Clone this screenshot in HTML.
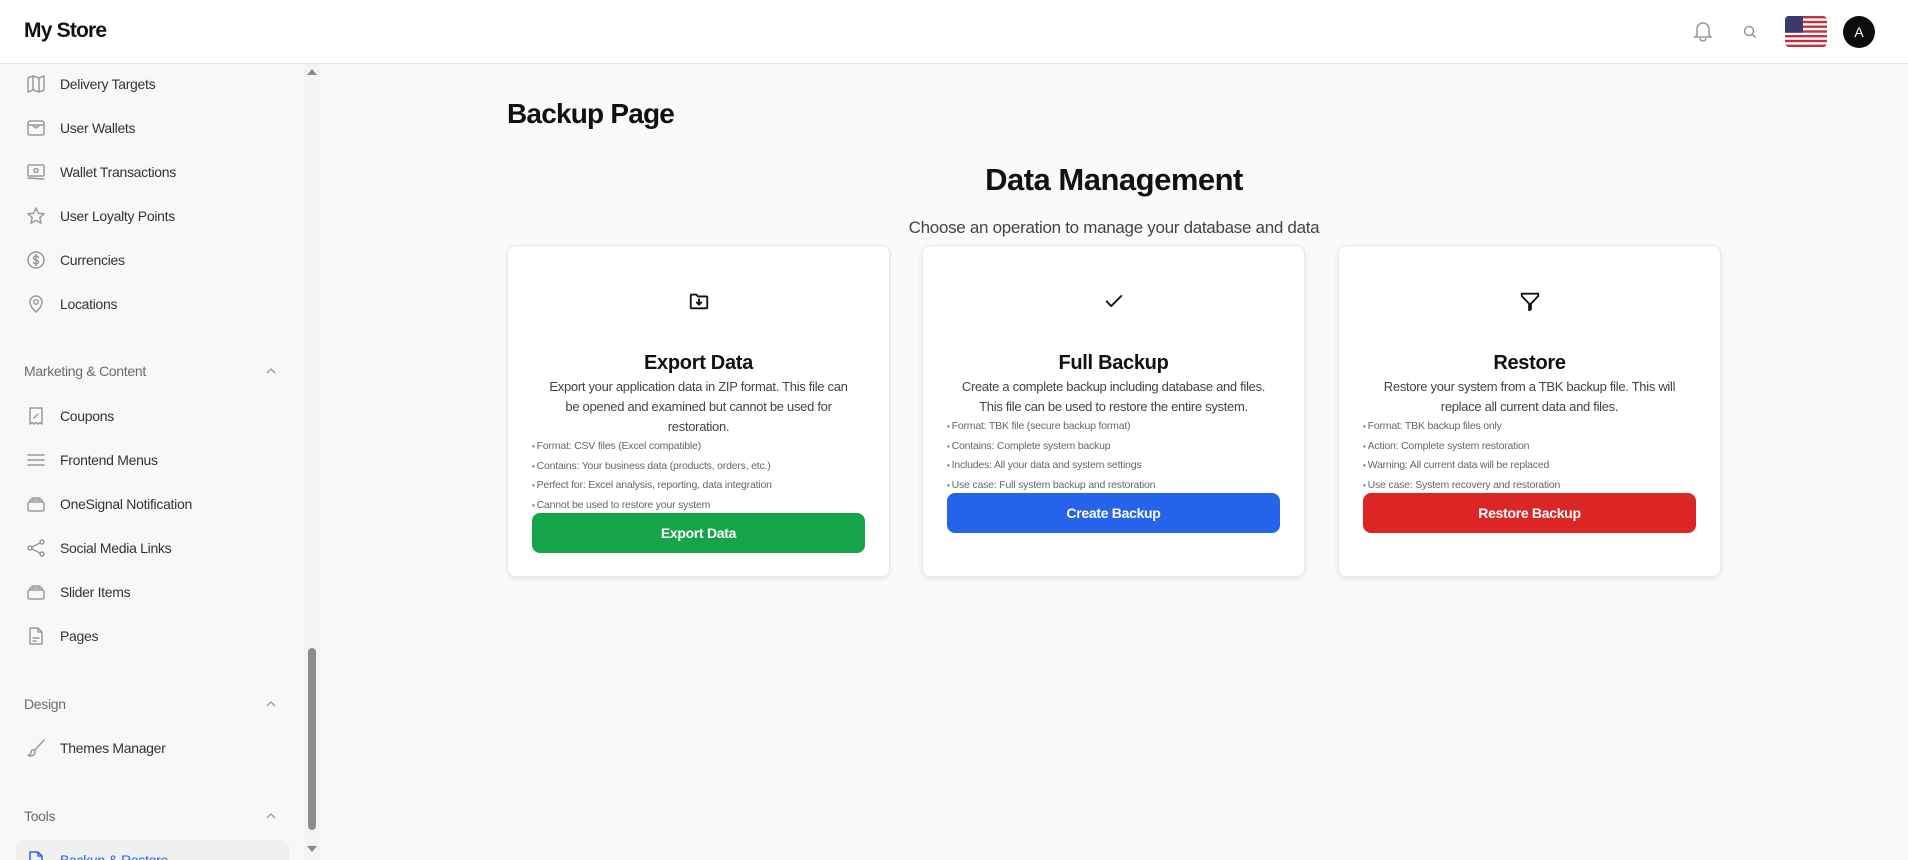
<!DOCTYPE html>
<html><head><meta charset="utf-8"><style>
*{box-sizing:border-box;margin:0;padding:0}
body{width:1908px;height:860px;overflow:hidden;background:#fafafa;font-family:"Liberation Sans",sans-serif;color:#111;position:relative}
.hdr{position:absolute;left:0;top:0;width:1908px;height:64px;background:#fff;border-bottom:1px solid #e5e5e5}
.logo{position:absolute;left:24px;top:19px;font-size:21px;font-weight:bold;letter-spacing:-0.8px}
.side{position:absolute;left:0;top:64px;width:304px;height:796px;background:#f8f8f8;overflow:hidden}
.sb{position:absolute;left:304px;top:64px;width:16px;height:796px;background:#f4f4f4}
.thumb{position:absolute;left:308px;top:648px;width:8px;height:182px;background:#8c8c8c;border-radius:4px}
.item{position:absolute;left:26px;height:24px;display:flex;align-items:center;font-size:14px;color:#333;letter-spacing:-0.3px}
.item svg{width:20px;height:20px;margin-right:14px;fill:none;stroke:#9a9a9a;stroke-width:1.5;stroke-linecap:round;stroke-linejoin:round}
.sec{position:absolute;left:24px;font-size:14px;color:#6b6b6b;letter-spacing:-0.3px}
.chev{position:absolute;left:265px;width:12px;height:12px}
.main h1{position:absolute;left:507px;top:98px;font-size:28px;font-weight:bold;letter-spacing:-0.8px}
.dm{position:absolute;left:320px;width:1588px;text-align:center}
.card{position:absolute;top:245px;width:383px;height:332px;background:#fff;border:1px solid #e8e8e8;border-radius:8px;box-shadow:0 2px 6px rgba(0,0,0,.08);padding:0 24px;text-align:center}
.card .ic{height:104px;display:flex;justify-content:center;padding-top:44px}
.card .ic svg{width:22px;height:22px;fill:none;stroke:#111;stroke-width:2;stroke-linecap:round;stroke-linejoin:round}
.card h3{font-size:20px;line-height:27px;letter-spacing:-0.3px}
.card p{font-size:13px;line-height:20px;color:#444;letter-spacing:-0.3px;white-space:nowrap}
.card ul{list-style:none;text-align:left;font-size:10.5px;line-height:19.6px;height:auto;color:#666;letter-spacing:-0.2px}
.card li{height:19.6px}
.card li:before{content:"• ";font-size:8px}
.btn{height:40px;border-radius:8px;color:#fff;font-weight:bold;font-size:14px;display:flex;align-items:center;justify-content:center;letter-spacing:-0.3px}
</style></head><body>
<div class="hdr">
 <div class="logo">My Store</div>
 <svg style="position:absolute;left:1693px;top:20px" width="20" height="22" viewBox="0 0 20 22" fill="none" stroke="#999" stroke-width="1.5"><path d="M4 15V9a6 6 0 0 1 12 0v6l2 2H2z"/><path d="M7 18a3 3 0 0 0 6 0"/></svg>
 <svg style="position:absolute;left:1743px;top:25px" width="14" height="14" viewBox="0 0 14 14" fill="none" stroke="#888" stroke-width="1.3"><circle cx="6" cy="6" r="4.5"/><path d="M9.5 9.5l3 3"/></svg>
 <svg style="position:absolute;left:1785px;top:16px" width="42" height="31" viewBox="0 0 42 31"><defs><clipPath id="c"><rect width="42" height="31" rx="4"/></clipPath></defs><g clip-path="url(#c)"><rect width="42" height="31" fill="#fff"/><g fill="#c23040"><rect y="0" width="42" height="2.4"/><rect y="4.8" width="42" height="2.4"/><rect y="9.5" width="42" height="2.4"/><rect y="14.3" width="42" height="2.4"/><rect y="19" width="42" height="2.4"/><rect y="23.8" width="42" height="2.4"/><rect y="28.6" width="42" height="2.4"/></g><rect width="18" height="16.7" fill="#3c3b6e"/></g></svg>
 <div style="position:absolute;left:1843px;top:16px;width:32px;height:32px;border-radius:50%;background:#0b0b0b;color:#fff;font-size:14px;display:flex;align-items:center;justify-content:center">A</div>
</div>
<div class="side">
 <div class="item" style="top:8px"><svg viewBox="0 0 20 20"><path d="M2 4l5-2 6 2 5-2v14l-5 2-6-2-5 2z M7 2v14 M13 4v14"/></svg>Delivery Targets</div>
 <div class="item" style="top:52px"><svg viewBox="0 0 20 20"><rect x="2" y="3" width="16" height="14" rx="2"/><path d="M2 7h16 M6 7l4 3 4-3"/></svg>User Wallets</div>
 <div class="item" style="top:96px"><svg viewBox="0 0 20 20"><rect x="2" y="3" width="16" height="11" rx="1"/><circle cx="10" cy="8.5" r="2"/><path d="M2 16l16 1"/></svg>Wallet Transactions</div>
 <div class="item" style="top:140px"><svg viewBox="0 0 20 20"><path d="M10 2l2.4 5.2 5.6.6-4.2 3.8 1.2 5.6L10 14.4 5 17.2l1.2-5.6L2 7.8l5.6-.6z"/></svg>User Loyalty Points</div>
 <div class="item" style="top:184px"><svg viewBox="0 0 20 20"><circle cx="10" cy="10" r="8"/><path d="M12.5 7.5c-.5-1-1.5-1.5-2.5-1.5-1.5 0-2.5.8-2.5 2s1 1.6 2.5 2 2.5.8 2.5 2-1 2-2.5 2c-1 0-2-.5-2.5-1.5 M10 4.5v11"/></svg>Currencies</div>
 <div class="item" style="top:228px"><svg viewBox="0 0 20 20"><path d="M10 18s-6-5-6-10a6 6 0 0 1 12 0c0 5-6 10-6 10z"/><circle cx="10" cy="8" r="2.2"/></svg>Locations</div>
 <div class="sec" style="top:299px">Marketing &amp; Content</div>
 <svg class="chev" style="top:301px" viewBox="0 0 12 12" fill="none" stroke="#999" stroke-width="1.3"><path d="M2 8l4-4 4 4"/></svg>
 <div class="item" style="top:340px"><svg viewBox="0 0 20 20"><path d="M4 2h12v16l-2-1.5-2 1.5-2-1.5-2 1.5-2-1.5-2 1.5z M8 12l4-4"/></svg>Coupons</div>
 <div class="item" style="top:384px"><svg viewBox="0 0 20 20"><path d="M2 5h16 M2 10h16 M2 15h16"/></svg>Frontend Menus</div>
 <div class="item" style="top:428px"><svg viewBox="0 0 20 20"><rect x="2" y="8" width="16" height="9" rx="2"/><path d="M4 8V6h12v2 M6 6V4h8v2"/></svg>OneSignal Notification</div>
 <div class="item" style="top:472px"><svg viewBox="0 0 20 20"><circle cx="16" cy="4" r="2"/><circle cx="16" cy="16" r="2"/><circle cx="4" cy="10" r="2"/><path d="M6 9l8-4 M6 11l8 4"/></svg>Social Media Links</div>
 <div class="item" style="top:516px"><svg viewBox="0 0 20 20"><rect x="2" y="8" width="16" height="9" rx="2"/><path d="M4 8V6h12v2 M6 6V4h8v2"/></svg>Slider Items</div>
 <div class="item" style="top:560px"><svg viewBox="0 0 20 20"><path d="M4 2h8l4 4v12H4z M12 2v4h4 M7 12h6 M7 15h3"/></svg>Pages</div>
 <div class="sec" style="top:632px">Design</div>
 <svg class="chev" style="top:634px" viewBox="0 0 12 12" fill="none" stroke="#999" stroke-width="1.3"><path d="M2 8l4-4 4 4"/></svg>
 <div class="item" style="top:672px"><svg viewBox="0 0 20 20"><path d="M18 2L9 12 M9 12c-2-1-4 0-4 2s-1 3-3 3c2 2 6 1 7-2z"/></svg>Themes Manager</div>
 <div class="sec" style="top:744px">Tools</div>
 <svg class="chev" style="top:746px" viewBox="0 0 12 12" fill="none" stroke="#999" stroke-width="1.3"><path d="M2 8l4-4 4 4"/></svg>
 <div style="position:absolute;left:16px;top:776px;width:273px;height:40px;background:#f0f0f0;border-radius:8px"></div>
 <div class="item" style="top:784px;color:#2563eb"><svg viewBox="0 0 20 20" style="stroke:#2563eb"><path d="M4 2h8l4 4v12H4z M12 2v4h4"/></svg>Backup &amp; Restore</div>
</div>
<div class="sb"></div>
<svg style="position:absolute;left:307px;top:69px" width="10" height="6"><path d="M0 6L5 0 10 6z" fill="#888"/></svg>
<svg style="position:absolute;left:307px;top:846px" width="10" height="6"><path d="M0 0L5 6 10 0z" fill="#888"/></svg>
<div class="thumb"></div>
<div class="main">
 <h1>Backup Page</h1>
 <div class="dm" style="top:162px;font-size:31px;font-weight:bold;letter-spacing:-0.5px">Data Management</div>
 <div class="dm" style="top:218px;font-size:17px;color:#444;letter-spacing:-0.3px">Choose an operation to manage your database and data</div>
</div>
<div class="card" style="left:507px">
 <div class="ic"><svg viewBox="0 0 24 24"><path d="M3 6a1 1 0 0 1 1-1h5l2 2h9a1 1 0 0 1 1 1v11a1 1 0 0 1-1 1H4a1 1 0 0 1-1-1z M12 10v6 M9.5 13.5L12 16l2.5-2.5"/></svg></div>
 <h3>Export Data</h3>
 <p>Export your application data in ZIP format. This file can<br>be opened and examined but cannot be used for<br>restoration.</p>
 <ul><li>Format: CSV files (Excel compatible)</li><li>Contains: Your business data (products, orders, etc.)</li><li>Perfect for: Excel analysis, reporting, data integration</li><li>Cannot be used to restore your system</li></ul>
 <div class="btn" style="background:#16a34a;margin-top:-2px">Export Data</div>
</div>
<div class="card" style="left:922px">
 <div class="ic"><svg viewBox="0 0 24 24"><path d="M4 12.5l5 5L20 6.5"/></svg></div>
 <h3>Full Backup</h3>
 <p>Create a complete backup including database and files.<br>This file can be used to restore the entire system.</p>
 <ul><li>Format: TBK file (secure backup format)</li><li>Contains: Complete system backup</li><li>Includes: All your data and system settings</li><li>Use case: Full system backup and restoration</li></ul>
 <div class="btn" style="background:#2563eb;margin-top:-2px">Create Backup</div>
</div>
<div class="card" style="left:1338px">
 <div class="ic"><svg viewBox="0 0 24 24"><path d="M3 4h18v2.5L13 15v6l-2 1v-7L3 6.5z"/></svg></div>
 <h3>Restore</h3>
 <p>Restore your system from a TBK backup file. This will<br>replace all current data and files.</p>
 <ul><li>Format: TBK backup files only</li><li>Action: Complete system restoration</li><li>Warning: All current data will be replaced</li><li>Use case: System recovery and restoration</li></ul>
 <div class="btn" style="background:#dc2626;margin-top:-2px">Restore Backup</div>
</div>
</body></html>
